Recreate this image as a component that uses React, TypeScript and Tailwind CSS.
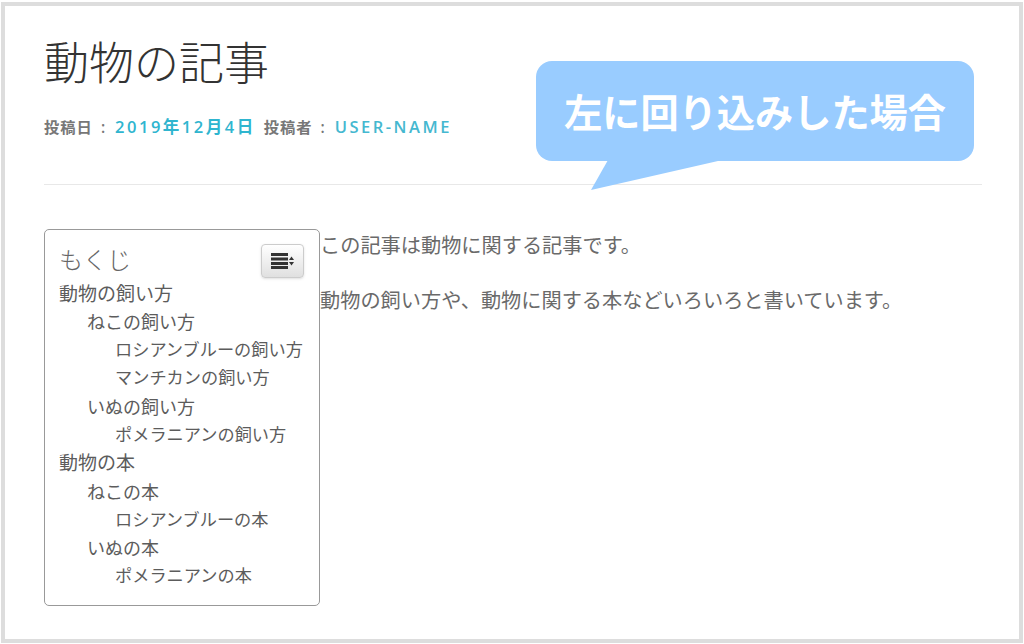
const jp = '"Noto Sans CJK JP", "Open Sans", sans-serif';

const tocItems = [
  { label: '動物の飼い方', level: 1 },
  { label: 'ねこの飼い方', level: 2 },
  { label: 'ロシアンブルーの飼い方', level: 3 },
  { label: 'マンチカンの飼い方', level: 3 },
  { label: 'いぬの飼い方', level: 2 },
  { label: 'ポメラニアンの飼い方', level: 3 },
  { label: '動物の本', level: 1 },
  { label: 'ねこの本', level: 2 },
  { label: 'ロシアンブルーの本', level: 3 },
  { label: 'いぬの本', level: 2 },
  { label: 'ポメラニアンの本', level: 3 },
];

function TocIcon() {
  return (
    <svg width="24" height="16" viewBox="0 0 24 16" fill="#333">
      <rect x="0" y="0" width="17" height="3" />
      <rect x="0" y="4.5" width="17" height="3" />
      <rect x="0" y="9" width="17" height="3" />
      <rect x="0" y="13" width="17" height="3" />
      <path d="M20.5 3.5L23 7H18z" />
      <path d="M18 9h5l-2.5 3.5z" />
    </svg>
  );
}

function Toc() {
  return (
    <div className="w-[276px] h-[377px] shrink-0 border border-[#999] rounded-[5px] pl-[14px] pr-[15px] pt-[14px]">
      <div className="flex justify-between items-start h-[34.5px]">
        <div className="text-[24px] leading-[30px] text-[#666] font-light">もくじ</div>
        <button className="w-[43px] h-[34px] flex items-center justify-center rounded-[4px] border border-[#ccc] bg-gradient-to-b from-white to-[#e0e0e0] shadow-sm">
          <TocIcon />
        </button>
      </div>
      <ul>
        {tocItems.map((item) => (
          <li
            key={item.label}
            className={
              'h-[28.3px] leading-[28.3px] whitespace-nowrap text-[#5c5c5c] ' +
              (item.level === 1
                ? 'text-[19px]'
                : item.level === 2
                  ? 'text-[18px] pl-[28px]'
                  : 'text-[17.2px] pl-[56px]')
            }
          >
            {item.label}
          </li>
        ))}
      </ul>
    </div>
  );
}

const metaFont = { fontFamily: '"Open Sans", "Noto Sans CJK JP", sans-serif' };

export default function App() {
  return (
    <div className="relative w-[1024px] h-[644px] bg-white pl-[1px] pt-[2px]" style={{ fontFamily: jp }}>
      <div className="h-[641px] w-[1022px] border-4 border-[#ddd] pl-[39px] pr-[37px] pt-[25px]">
        <h1 className="text-[45px] leading-[60px] font-light text-[#333]">動物の記事</h1>
        <div className="mt-[24px] text-[15.3px] leading-[24px] font-semibold tracking-[1px] text-[#777] whitespace-nowrap" style={metaFont}>
          投稿日<span className="ml-2">:</span> <span className="ml-[4px] text-[#2fb5cf] tracking-[2.5px] text-[16.5px]">2019年12月4日</span> <span className="ml-[3px]">投稿者</span><span className="ml-2">:</span>{' '}
          <span className="ml-[4px] text-[#45b8d0] tracking-[2.5px] text-[16.5px]">USER-NAME</span>
        </div>
        <div className="mt-[45px] border-t border-[#e8e8e8]" />
        <div className="flex mt-[44px]">
          <Toc />
          <div className="text-[20.2px] text-[#6a6a6a] leading-[28px] pt-[2px]">
            <p>この記事は動物に関する記事です。</p>
            <p className="mt-[27px]">動物の飼い方や、動物に関する本などいろいろと書いています。</p>
          </div>
        </div>
      </div>

      {/* callout over the header */}
      <div className="absolute left-[536px] top-[61px] w-[438px] h-[100px] bg-[#99ccff] rounded-[16px] flex items-center justify-center">
        <span className="text-[38.2px] font-bold text-white leading-none">左に回り込みした場合</span>
        <svg className="absolute left-[54px] top-[99px]" width="130" height="31" viewBox="0 0 130 31" fill="#99ccff">
          <polygon points="18,0 1,30 128,1 128,0" />
        </svg>
      </div>
    </div>
  );
}
